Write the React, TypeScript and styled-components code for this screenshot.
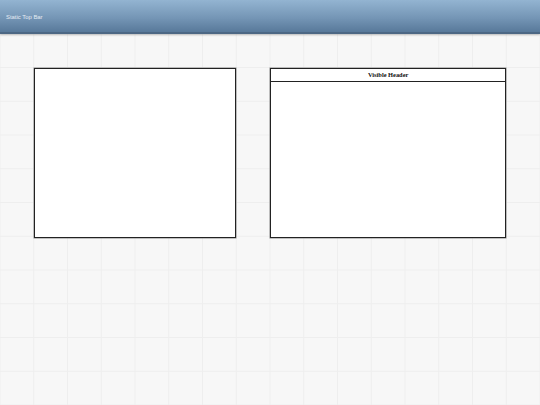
import React from "react";
import styled, { createGlobalStyle } from "styled-components";

const CELL = 540 / 16;

const Global = createGlobalStyle`
  html, body { margin: 0; padding: 0; }
  body {
    width: 540px;
    height: 405px;
    overflow: hidden;
    background-color: #f7f7f7;
    background-image:
      linear-gradient(to right, #eeeeee 1px, transparent 1px),
      linear-gradient(to bottom, #eeeeee 1px, transparent 1px);
    background-size: ${CELL}px ${CELL}px;
    background-position: -0.5px -0.5px;
    font-family: "Liberation Sans", Arial, sans-serif;
  }
`;

const Page = styled.div`
  display: flex;
  flex-direction: column;
  width: 540px;
  height: 405px;
`;

const TopBar = styled.header`
  height: ${CELL}px;
  box-sizing: border-box;
  display: flex;
  align-items: center;
  padding: 2px 0 0 6px;
  background: linear-gradient(to bottom, #93b4d1 0%, #7596b6 55%, #58799a 100%);
  border-bottom: 2px solid #4c6784;
  box-shadow: 0 1px 2px rgba(0, 0, 0, 0.25);
  color: #e4ecf4;
  font-family: "Liberation Sans", Arial, sans-serif;
  font-size: 5.9px;
`;

const Canvas = styled.main`
  display: grid;
  grid-template-columns: repeat(16, ${CELL}px);
  grid-template-rows: repeat(11, ${CELL}px);
`;

const Panel = styled.section<{ $col: string }>`
  grid-column: ${(p) => p.$col};
  grid-row: 2 / 7;
  margin-bottom: -1.5px;
  box-sizing: border-box;
  background: #ffffff;
  border: 1px solid #222;
  box-shadow: 0 0 0 0.5px #888;
  display: flex;
  flex-direction: column;
`;

const PanelHeader = styled.div`
  height: 12.5px;
  flex: none;
  display: flex;
  align-items: center;
  justify-content: center;
  border-bottom: 1px solid #222;
  font-family: "Liberation Serif", "Times New Roman", serif;
  font-weight: bold;
  font-size: 6.4px;
  color: #111;
`;

export default function App() {
  return (
    <>
      <Global />
      <Page>
        <TopBar>Static Top Bar</TopBar>
        <Canvas>
          <Panel $col="2 / 8" />
          <Panel $col="9 / 16">
            <PanelHeader>Visible Header</PanelHeader>
          </Panel>
        </Canvas>
      </Page>
    </>
  );
}
